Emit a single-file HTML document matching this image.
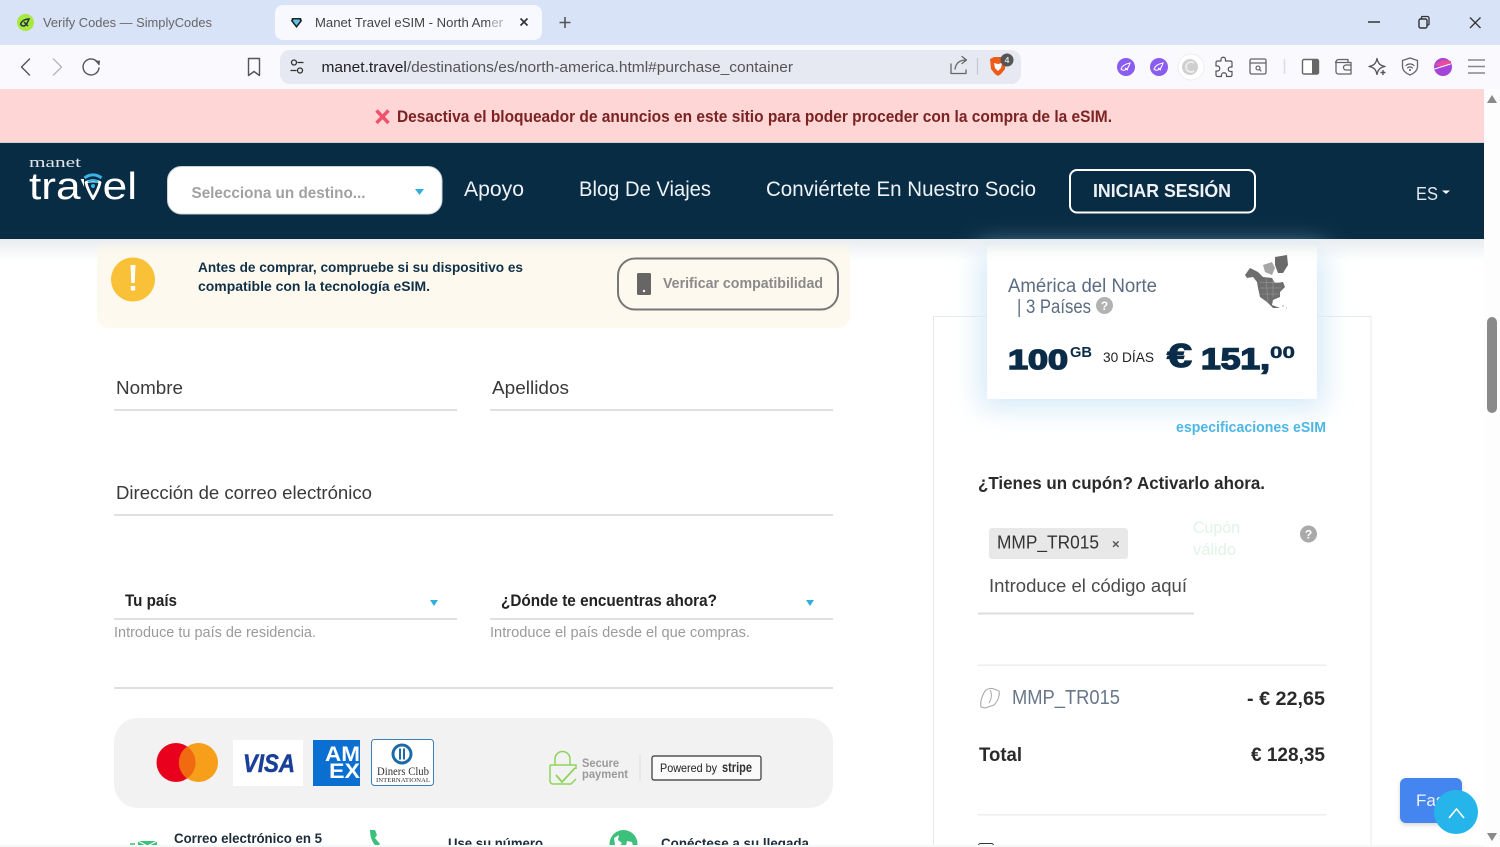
<!DOCTYPE html>
<html lang="es"><head><meta charset="utf-8"><title>Manet Travel eSIM - North America</title>
<style>
html,body{margin:0;padding:0;width:1500px;height:847px;overflow:hidden;background:#fff}
svg{display:block;filter:blur(.3px)}
text{font-family:"Liberation Sans",sans-serif;white-space:pre}
.ic{fill:none;stroke:#555;stroke-width:1.6;stroke-linecap:round;stroke-linejoin:round}
</style></head><body>
<svg width="1500" height="847" viewBox="0 0 1500 847" xmlns="http://www.w3.org/2000/svg">
<defs>
<linearGradient id="top" x1="0" y1="0" x2="0" y2="1"><stop offset="0" stop-color="#e9edf0"/><stop offset="1" stop-color="#fff"/></linearGradient>
<linearGradient id="fadeC" x1="0" y1="0" x2="0" y2="1"><stop offset="0" stop-color="#eef0f1"/><stop offset="1" stop-color="#fff" stop-opacity="0"/></linearGradient>
<linearGradient id="fadeA" x1="0" y1="0" x2="0" y2="1"><stop offset="0" stop-color="#f1f1ef"/><stop offset="1" stop-color="#fdf9ee" stop-opacity="0"/></linearGradient>
<filter id="sh" x="-20%" y="-30%" width="140%" height="160%"><feGaussianBlur stdDeviation="14"/></filter>
<filter id="sh2" x="-20%" y="-20%" width="140%" height="150%"><feGaussianBlur stdDeviation="2"/></filter>
</defs>

<!-- tab strip -->
<rect width="1500" height="45" fill="#d8e3f8"/>
<circle cx="25.500" cy="22.500" r="8.500" fill="#a6e83c"/>
<path d="M21 23c2-3 5-4 8-4-1 2-2 6-5 7-2 0-4-1-3-3zM24 22l4 4" fill="none" stroke="#234" stroke-width="1.500"/>
<text x="43" y="27" font-size="12.500" fill="#666" textLength="169" lengthAdjust="spacingAndGlyphs">Verify Codes — SimplyCodes</text>
<rect x="275" y="5" width="267" height="35" rx="8" fill="#f7f9ff"/>
<path d="M292 18h9l1 3-5.500 7-5.500-7z" fill="#222"/><path d="M293.500 19.500h6l.5 1.500-3.500 4.500-3.500-4.500z" fill="#5cc4e8"/>
<text x="315" y="27" font-size="12.500" fill="#444" textLength="188" lengthAdjust="spacingAndGlyphs">Manet Travel eSIM - North Amer</text>
<rect x="490" y="10" width="14" height="24" fill="#f7f9ff" opacity=".55"/>
<path d="M520.500 18.500l7 7m0-7l-7 7" stroke="#333" stroke-width="1.700" fill="none"/>
<path d="M565 17v11m-5.500-5.500h11" stroke="#555" stroke-width="1.600" fill="none"/>
<path d="M1368 22h12" stroke="#333" stroke-width="1.500"/>
<rect x="1419" y="19" width="8" height="9" rx="1.500" fill="none" stroke="#333" stroke-width="1.400"/>
<path d="M1421.500 19v-1.500a1 1 0 0 1 1-1h5a1.500 1.500 0 0 1 1.500 1.500v6a1 1 0 0 1-1 1h-1" fill="none" stroke="#333" stroke-width="1.300"/>
<path d="M1470 17.500l10.500 10.500m0-10.500l-10.500 10.500" stroke="#333" stroke-width="1.300"/>

<!-- toolbar -->
<rect y="45" width="1500" height="44" fill="#f9f9fe"/>
<path d="M29.500 59l-8 8 8 8" class="ic" style="stroke:#555;stroke-width:1.400"/>
<path d="M53.500 59l8 8-8 8" class="ic" style="stroke:#b5b8c0;stroke-width:1.400"/>
<path d="M98.500 64a8 8 0 1 0 .5 4" class="ic" style="stroke:#555;stroke-width:1.400"/><path d="M95 61l5-.5-.500 5z" fill="#555"/>
<path d="M248.500 58.500h11v17l-5.500-4-5.500 4z" class="ic" style="stroke:#555;stroke-width:1.400"/>
<rect x="280" y="50" width="741" height="34" rx="10" fill="#e6e8f2"/>
<circle cx="294" cy="62.500" r="2.500" class="ic" style="stroke:#333;stroke-width:1.300"/><path d="M298 62.500h5M291 70.500h5" class="ic" style="stroke:#333;stroke-width:1.300"/><circle cx="300" cy="70.500" r="2.500" class="ic" style="stroke:#333;stroke-width:1.300"/>
<text x="321.500" y="72" font-size="15" fill="#555" textLength="471.500" lengthAdjust="spacingAndGlyphs"><tspan fill="#222">manet.travel</tspan>/destinations/es/north-america.html#purchase_container</text>
<path d="M951 64v9.500h15v-3.500M955 69c1-6 5-9 11-9m-4-3.500l4.500 3.500-4.500 3.500" class="ic" style="stroke:#666;stroke-width:1.300"/>
<path d="M977.500 58v17" stroke="#c6c8d0" stroke-width="1.200"/>
<path d="M990 59l4-2h8l4 2-1 10-4 5-3 2-3-2-4-5z" fill="#ee5a18"/>
<path d="M994 63l4 1 4-1-1 5-3 3-3-3z" fill="#fff"/>
<circle cx="1007" cy="60" r="6.500" fill="#555"/><text x="1007" y="63" font-size="8.500" font-weight="bold" fill="#ddd" text-anchor="middle">4</text>

<circle cx="1126" cy="67" r="9" fill="#8a5cf0"/><path d="M1121 69c1-3 4-5 9-6-1 3-2 6-5 7-2 .5-3.500-.2-4-1zm4-1l3 2" fill="none" stroke="#fff" stroke-width="1.100"/>
<circle cx="1159" cy="67" r="9" fill="#8a5cf0"/><path d="M1154 69c1-3 4-5 9-6-1 3-2 6-5 7-2 .5-3.500-.2-4-1zm4-1l3 2" fill="none" stroke="#fff" stroke-width="1.100"/>
<circle cx="1191" cy="67" r="13" fill="#fff" stroke="#eee"/><circle cx="1190" cy="67" r="8" fill="#cfcfcf"/><path d="M1194 63a5 5 0 1 0 0 8" fill="none" stroke="#eee" stroke-width="1.800"/>
<path d="M1221 59.500c0-3 4.500-3 4.500 0v1.500h5a1.500 1.500 0 0 1 1.500 1.500v4.500h-1.500c-3 0-3 4.500 0 4.500h1.500v3.500a1.500 1.500 0 0 1-1.500 1.500h-4v-1.500c0-3-5-3-5 0v1.500h-4a1.500 1.500 0 0 1-1.500-1.500v-4h1.500c3 0 3-5 0-5h-1.500v-3.500a1.500 1.500 0 0 1 1.500-1.500h3.500z" class="ic" style="stroke:#555;stroke-width:1.200"/>
<rect x="1250" y="59" width="16" height="15" rx="1.500" class="ic" style="stroke:#666;stroke-width:1.300"/><path d="M1250 63h16" class="ic" style="stroke:#666;stroke-width:1.300"/><circle cx="1258" cy="68" r="2" class="ic" style="stroke-width:1.100"/><path d="M1259.500 69.500l1.500 1.500" class="ic" style="stroke-width:1.100"/>
<path d="M1284.500 59v15" stroke="#d5def0" stroke-width="1.500"/>
<rect x="1302.500" y="59.500" width="16" height="14.500" rx="1.500" fill="#fff" stroke="#666" stroke-width="1.400"/><rect x="1312" y="59.500" width="6.500" height="14.500" fill="#666"/>
<path d="M1336 62.500c0-2 1-3 3-3h9v3M1336 62.500v9c0 1.500 1 2.500 2.500 2.500h12.500v-11.500h-13c-1.500 0-2.500-1-2.500 0z" class="ic" style="stroke:#666;stroke-width:1.300"/><path d="M1351 65h-5a2 2 0 0 0 0 5h5" class="ic" style="stroke:#666;stroke-width:1.300"/>
<path d="M1377 58.500c1 5 3 7 8 8-5 1-7 3-8 8-1-5-3-7-8-8 5-1 7-3 8-8z" class="ic" style="stroke:#555;stroke-width:1.300"/><path d="M1383 70v5m-2.500-2.500h5" stroke="#555" stroke-width="1.400"/>
<path d="M1410 58l7.500 2.500v6c0 4-3.500 7-7.500 8.500-4-1.500-7.500-4.500-7.500-8.500v-6z" class="ic" style="stroke:#666;stroke-width:1.300"/><path d="M1406 65.500a6 6 0 0 1 8 0M1407.500 68a3.500 3.500 0 0 1 5 0" class="ic" style="stroke-width:1.100"/><circle cx="1410" cy="70" r="1" fill="#555"/>
<circle cx="1443" cy="67" r="9" fill="#a544d8"/><path d="M1434.500 65l8-5 8.500 1v3l-8 3z" fill="#e84c9a"/><path d="M1434.500 69l16-5" stroke="#fff" stroke-width="1"/>
<path d="M1468 60h17M1468 66.500h17M1468 73h17" stroke="#888" stroke-width="1.500"/>

<!-- page -->
<rect x="0" y="239" width="1484" height="22" fill="url(#top)"/>
<rect x="0" y="89" width="1484" height="53" fill="#ffd6d6"/>
<path d="M376.500 110.500l12 12.500m0-12.500l-12 12.500" stroke="#f0526e" stroke-width="3.500"/>
<text x="397" y="122" font-size="16.500" font-weight="bold" fill="#7b2222" textLength="715" lengthAdjust="spacingAndGlyphs">Desactiva el bloqueador de anuncios en este sitio para poder proceder con la compra de la eSIM.</text>

<!-- header -->
<rect x="0" y="142" width="1484" height="97" fill="#082c44"/>
<rect x="0" y="142" width="1484" height="1" fill="#c9cfd4"/>
<text x="29" y="167" font-size="15" fill="#e0e5e9" textLength="52" lengthAdjust="spacingAndGlyphs" style="font-family:'Liberation Serif',serif">manet</text>
<text x="29" y="199" font-size="38" fill="#fff" textLength="108" lengthAdjust="spacingAndGlyphs">travel</text>
<rect x="84" y="168" width="20" height="33" fill="#082c44"/>
<path d="M86 182.500c3-2 11-2 14 0-1 5-4 11-7 16-3-5-6-11-7-16z" fill="none" stroke="#fff" stroke-width="2.800" stroke-linejoin="round"/>
<path d="M84.500 178a13 13 0 0 1 17 0" fill="none" stroke="#3bb3e6" stroke-width="3"/>
<path d="M88 182a8 8 0 0 1 10 0" fill="none" stroke="#3bb3e6" stroke-width="2.400"/>
<circle cx="93" cy="186" r="2" fill="#3bb3e6"/>
<rect x="167.500" y="166.500" width="274.500" height="47.500" rx="14" fill="#fff" stroke="#cdd2d6"/>
<text x="191.500" y="198" font-size="16" font-weight="bold" fill="#a1a1a1" textLength="174" lengthAdjust="spacingAndGlyphs">Selecciona un destino...</text>
<path d="M415 189h9l-4.500 6z" fill="#2fb0dc"/>
<g fill="#eef2f5" font-size="21">
<text x="464" y="196" textLength="60" lengthAdjust="spacingAndGlyphs">Apoyo</text>
<text x="579" y="196" textLength="132" lengthAdjust="spacingAndGlyphs">Blog De Viajes</text>
<text x="766" y="196" textLength="270" lengthAdjust="spacingAndGlyphs">Conviértete En Nuestro Socio</text>
</g>
<rect x="1070" y="170" width="185" height="42.500" rx="7" fill="none" stroke="#fff" stroke-width="2"/>
<text x="1093" y="197" font-size="18" font-weight="bold" fill="#eef2f5" textLength="138" lengthAdjust="spacingAndGlyphs">INICIAR SESIÓN</text>
<text x="1416" y="200" font-size="18" fill="#e4e9ec" textLength="22" lengthAdjust="spacingAndGlyphs">ES</text>
<path d="M1442 190.500h8l-4 3.500z" fill="#fff"/>

<!-- alert -->
<rect x="97" y="243" width="753" height="85" rx="12" fill="#fdf9ee"/>
<rect x="97" y="243" width="753" height="18" fill="url(#fadeA)"/>
<circle cx="133" cy="279.500" r="22" fill="#f8c137"/>
<path d="M130.500 265h5l-.8 18h-3.400z" fill="#fff"/><rect x="130.800" y="286" width="4.400" height="4.500" fill="#fff"/>
<g font-size="14" font-weight="bold" fill="#103048">
<text x="198" y="272" textLength="325" lengthAdjust="spacingAndGlyphs">Antes de comprar, compruebe si su dispositivo es</text>
<text x="198" y="291" textLength="232" lengthAdjust="spacingAndGlyphs">compatible con la tecnología eSIM.</text>
</g>
<rect x="618" y="258.500" width="220" height="51" rx="17" fill="none" stroke="#777" stroke-width="2"/>
<rect x="637" y="273" width="14" height="22" rx="1.500" fill="#666"/><circle cx="644" cy="291" r="1.200" fill="#fdf9ee"/>
<text x="663" y="288" font-size="14.500" font-weight="bold" fill="#8a8a8a" textLength="160" lengthAdjust="spacingAndGlyphs">Verificar compatibilidad</text>

<!-- form -->
<g font-size="18.500" fill="#3a3a3a">
<text x="116" y="394" textLength="67" lengthAdjust="spacingAndGlyphs">Nombre</text>
<text x="492" y="394" textLength="77" lengthAdjust="spacingAndGlyphs">Apellidos</text>
<text x="116" y="499" textLength="256" lengthAdjust="spacingAndGlyphs">Dirección de correo electrónico</text>
</g>
<g fill="#e0e0e0">
<rect x="114" y="409" width="343" height="2"/><rect x="490" y="409" width="343" height="2"/>
<rect x="114" y="514" width="719" height="2"/>
<rect x="114" y="618" width="343" height="2"/><rect x="490" y="618" width="343" height="2"/>
<rect x="114" y="687" width="719" height="2"/>
</g>
<g font-size="16.500" font-weight="bold" fill="#222">
<text x="125" y="606" textLength="52" lengthAdjust="spacingAndGlyphs">Tu país</text>
<text x="501" y="606" textLength="216" lengthAdjust="spacingAndGlyphs">¿Dónde te encuentras ahora?</text>
</g>
<path d="M430 600h8l-4 6zM806 600h8l-4 6z" fill="#2fb0dc"/>
<g font-size="14.500" fill="#9a9a9a">
<text x="114" y="637" textLength="202" lengthAdjust="spacingAndGlyphs">Introduce tu país de residencia.</text>
<text x="490" y="637" textLength="260" lengthAdjust="spacingAndGlyphs">Introduce el país desde el que compras.</text>
</g>

<!-- payments -->
<rect x="114" y="718" width="719" height="90" rx="24" fill="#f2f2f2"/>
<circle cx="176" cy="762.500" r="19.500" fill="#e8001c"/><circle cx="198.500" cy="762.500" r="19.500" fill="#f79e1b"/>
<path d="M187.200 746.500a19.500 19.500 0 0 1 0 32 19.500 19.500 0 0 1 0-32z" fill="#f26a10"/>
<rect x="233" y="740" width="70" height="46" fill="#fff"/>
<text x="243" y="772" font-size="25" font-weight="bold" font-style="italic" fill="#1a3f99" textLength="52" lengthAdjust="spacingAndGlyphs" stroke="#1a3f99" stroke-width=".5">VISA</text>
<rect x="313" y="740" width="47" height="46" fill="#0a6fd0"/>
<text x="325" y="761" font-size="21" font-weight="bold" fill="#fff" textLength="35" lengthAdjust="spacingAndGlyphs">AM</text>
<text x="329" y="778" font-size="21" font-weight="bold" fill="#fff" textLength="31" lengthAdjust="spacingAndGlyphs">EX</text>
<rect x="371.500" y="739.500" width="62" height="46" rx="3" fill="#fff" stroke="#3a7fb5"/>
<circle cx="402" cy="754" r="10.500" fill="#1d6aa8"/><circle cx="402" cy="754" r="7.500" fill="#fff"/><path d="M400 748.500v11M404 748.500v11" stroke="#1d6aa8" stroke-width="2"/>
<text x="377" y="775" font-size="11.500" fill="#333" textLength="52" lengthAdjust="spacingAndGlyphs" style="font-family:'Liberation Serif',serif">Diners Club</text>
<text x="376" y="782" font-size="6" fill="#333" textLength="54" lengthAdjust="spacingAndGlyphs" style="font-family:'Liberation Serif',serif">INTERNATIONAL</text>
<path d="M555 765v-6a7.500 7.500 0 0 1 15 0v6M550 765h26v4M550 765v16a3 3 0 0 0 3 3h18l5-5" fill="none" stroke="#8ed45c" stroke-width="1.500"/>
<path d="M556 775l6 7 13-14" fill="none" stroke="#8ed45c" stroke-width="1.800"/>
<g font-size="11.500" font-weight="bold" fill="#9a9a9a">
<text x="582" y="767" textLength="37" lengthAdjust="spacingAndGlyphs">Secure</text>
<text x="582" y="778" textLength="46" lengthAdjust="spacingAndGlyphs">payment</text>
</g>
<path d="M640 755v25" stroke="#dcdcdc"/>
<rect x="652" y="756" width="109" height="24" rx="2" fill="#fafafa" stroke="#333" stroke-width="1.200"/>
<text x="660" y="772" font-size="12" fill="#222" textLength="57" lengthAdjust="spacingAndGlyphs">Powered by</text>
<text x="722" y="772" font-size="14" font-weight="bold" fill="#333" textLength="30" lengthAdjust="spacingAndGlyphs">stripe</text>

<!-- bottom features -->
<g font-size="14" fill="#1c2c3a">
<text x="174" y="843" font-weight="bold" textLength="148" lengthAdjust="spacingAndGlyphs">Correo electrónico en 5</text>
<text x="448" y="848" font-weight="bold" textLength="95" lengthAdjust="spacingAndGlyphs">Use su número</text>
<text x="661" y="848" font-weight="bold" textLength="148" lengthAdjust="spacingAndGlyphs">Conéctese a su llegada</text>
</g>
<path d="M138 841h19v6h-19z" fill="#3cc07c"/><path d="M138 841l9.500 5 9.500-5" fill="none" stroke="#fff" stroke-width="1"/><path d="M130 844h5" stroke="#3cc07c" stroke-width="1.500"/>
<path d="M370 830h5l2 5-2 3 5 6-3 3c-4-3-7-9-7-17z" fill="#3cc07c"/>
<circle cx="623.500" cy="844" r="14" fill="#3cc07c"/><path d="M614 838l5-3-1 5 4 3-3 4-4-2zM627 841l5 1 1 4h-7z" fill="#fff"/>

<!-- right column -->
<rect x="933.500" y="316.500" width="437.500" height="540" fill="#fff" stroke="#e6e9ec"/>
<rect x="980" y="252" width="344" height="156" fill="#d3e9f7" filter="url(#sh)"/>
<rect x="987" y="245" width="330" height="154" fill="#fff"/>
<rect x="987" y="245" width="330" height="18" fill="url(#fadeC)"/>
<g font-size="19" fill="#5b6c82">
<text x="1008" y="292" textLength="149" lengthAdjust="spacingAndGlyphs">América del Norte</text>
<text x="1017" y="313" textLength="74" lengthAdjust="spacingAndGlyphs">| 3 Países</text>
</g>
<circle cx="1104.500" cy="305.500" r="8.500" fill="#b2b2b2"/><text x="1104.500" y="310" font-size="12" font-weight="bold" fill="#fff" text-anchor="middle">?</text>
<!-- map -->
<path d="M1275 257l12-2 1 10-5 8h-5l-3-8z" fill="#6a6a6a"/>
<path d="M1263 265l9-3 3 6-3 7-7-3z" fill="#a6a6a6"/>
<path d="M1245 275l5-7 8 4 5 5 9 1 3 5 8-1 2 5-5 5v5l-7 3-1 5 8 3h-7l-6-6-7-5-2-9-1-6-4-5-6 1z" fill="#6e6e6e"/>
<path d="M1259 282l22 1M1260 288l21 0M1262 294l17 0M1266 279l2 22M1273 280l0 17" stroke="#999" stroke-width=".6" fill="none"/>
<path d="M1282 306h2M1286 308h1" stroke="#aaa" stroke-width="1"/>
<g fill="#0a2c48" stroke="#0a2c48">
<text x="1008" y="369" font-size="28" font-weight="bold" stroke-width="1.500" textLength="60" lengthAdjust="spacingAndGlyphs">100</text>
<text x="1070" y="357" font-size="14.500" font-weight="bold" stroke="none" textLength="22" lengthAdjust="spacingAndGlyphs">GB</text>
<text x="1167" y="367" font-size="33" font-weight="bold" stroke-width="1.200" textLength="25" lengthAdjust="spacingAndGlyphs">€</text>
<text x="1201" y="369" font-size="30" font-weight="bold" stroke-width="1.500" textLength="69" lengthAdjust="spacingAndGlyphs">151,</text>
<text x="1270" y="358" font-size="17" font-weight="bold" stroke-width=".4" textLength="25" lengthAdjust="spacingAndGlyphs">00</text>
</g>
<text x="1103" y="362" font-size="14" fill="#222" textLength="51" lengthAdjust="spacingAndGlyphs">30 DÍAS</text>
<text x="1176" y="432" font-size="15" fill="#3ab0e2" textLength="150" lengthAdjust="spacingAndGlyphs" font-weight="bold" opacity=".9">especificaciones eSIM</text>
<text x="978" y="489" font-size="17.500" font-weight="bold" fill="#2a2a2a" textLength="287" lengthAdjust="spacingAndGlyphs">¿Tienes un cupón? Activarlo ahora.</text>
<rect x="989" y="528" width="139" height="31" rx="3" fill="#e8e8e8"/>
<text x="997" y="548.500" font-size="18" fill="#333" textLength="102" lengthAdjust="spacingAndGlyphs">MMP_TR015</text>
<text x="1112" y="548.500" font-size="13" font-weight="bold" fill="#555">×</text>
<g font-size="16.500" fill="#e1f3e6">
<text x="1193" y="533" textLength="47" lengthAdjust="spacingAndGlyphs">Cupón</text>
<text x="1193" y="555" textLength="43" lengthAdjust="spacingAndGlyphs">válido</text>
</g>
<circle cx="1308.500" cy="534" r="8.500" fill="#aaa"/><text x="1308.500" y="538.500" font-size="12" font-weight="bold" fill="#fff" text-anchor="middle">?</text>
<text x="989" y="592" font-size="18" fill="#4a4a4a" textLength="198" lengthAdjust="spacingAndGlyphs">Introduce el código aquí</text>
<rect x="978" y="612.500" width="216" height="2" fill="#dedede"/>
<rect x="978" y="664.500" width="348" height="1.500" fill="#ececec"/>
<path d="M985 691c3-3 7-3 9-2l5 2c1 4-1 10-5 14l-9 3-4-1c-1-5 1-11 4-16z" fill="none" stroke="#aaa" stroke-width="1.100"/><path d="M990 690c2 3 2 8-1 13" fill="none" stroke="#aaa"/>
<text x="1012" y="704" font-size="20" fill="#67768a" textLength="108" lengthAdjust="spacingAndGlyphs">MMP_TR015</text>
<text x="1247" y="705" font-size="19" font-weight="bold" fill="#2a2a2a" textLength="78" lengthAdjust="spacingAndGlyphs">- € 22,65</text>
<text x="979" y="761" font-size="19" font-weight="bold" fill="#2a2a2a" textLength="43" lengthAdjust="spacingAndGlyphs">Total</text>
<text x="1251" y="761" font-size="19" font-weight="bold" fill="#2a2a2a" textLength="74" lengthAdjust="spacingAndGlyphs">€ 128,35</text>
<rect x="978" y="814" width="348" height="1.500" fill="#ececec"/>
<rect x="978.500" y="843.500" width="15" height="10" rx="2" fill="none" stroke="#333"/>

<!-- bottom strip -->
<rect x="0" y="845" width="1484" height="2" fill="#f3f9f6"/>

<!-- scrollbar -->
<rect x="1484" y="89" width="16" height="758" fill="#fdfdfd"/>
<path d="M1492 95l5 8h-10z" fill="#8a8a8a"/>
<rect x="1487" y="317" width="10" height="96" rx="5" fill="#8a8a8a"/>
<path d="M1487 833h10l-5 8z" fill="#8a8a8a"/>

<!-- floating -->
<rect x="1400" y="780" width="62" height="45" rx="6" fill="#999" opacity=".4" filter="url(#sh2)"/>
<rect x="1400" y="778" width="62" height="45" rx="6" fill="#4485f0"/>
<text x="1416" y="806" font-size="17" fill="#eef4ff">Fast</text>
<circle cx="1456" cy="812" r="22" fill="#25b5ea"/>
<path d="M1449 818l7.500-9 7.500 9" fill="none" stroke="#fff" stroke-width="1.600"/>
</svg>
</body></html>
